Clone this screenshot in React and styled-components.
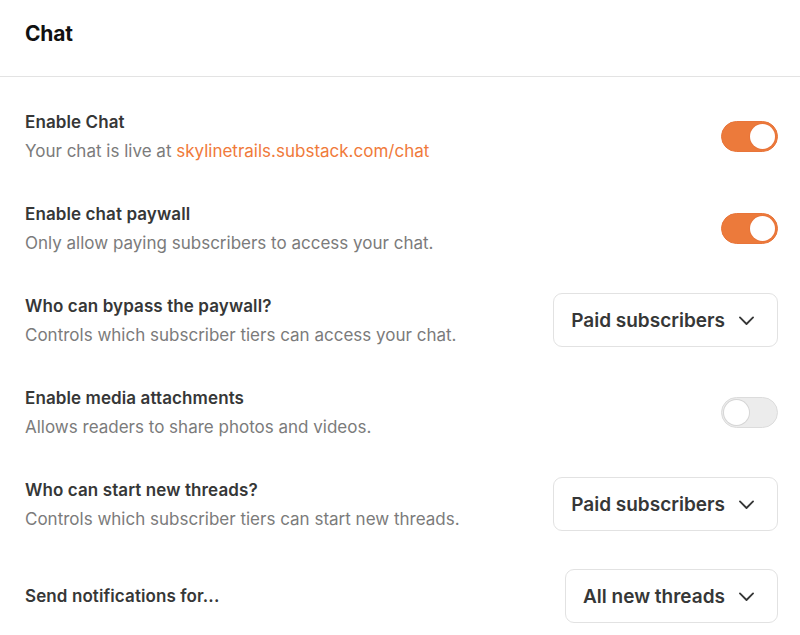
import React from "react";
import styled, { createGlobalStyle } from "styled-components";

const GlobalStyle = createGlobalStyle`
  html, body {
    margin: 0;
    padding: 0;
    background: #fff;
  }
  body {
    font-family: Inter, "Open Sans", sans-serif;
    -webkit-font-smoothing: antialiased;
  }
`;

const Page = styled.div`
  width: 800px;
  height: 635px;
  overflow: hidden;
  background: #fff;
`;

const Header = styled.header`
  height: 77px;
  display: flex;
  align-items: center;
  padding: 0 25px 10px;
  box-sizing: border-box;
  border-bottom: 1px solid #e3e3e3;
`;

const Title = styled.h1`
  margin: 0;
  font-size: 21px;
  font-weight: 700;
  color: #111;
  letter-spacing: -0.2px;
`;

const Content = styled.div`
  padding: 13px 22px 0 25px;
`;

const Row = styled.div`
  height: 92px;
  display: flex;
  align-items: center;
  justify-content: space-between;
`;

const Text = styled.div`
  display: flex;
  flex-direction: column;
  gap: 5px;
`;

const Label = styled.div`
  font-size: 17px;
  font-weight: 600;
  color: #363737;
  line-height: 24px;
  letter-spacing: 0.1px;
`;

const Desc = styled.div`
  font-size: 17px;
  color: #7b7b7b;
  line-height: 24px;
`;

const Link = styled.a`
  color: #f07a3a;
  text-decoration: none;
`;

const Track = styled.button`
  width: 57px;
  height: 31px;
  border-radius: 16px;
  border: 1px solid ${(p) => (p.on ? "#e8753a" : "#dcdcdc")};
  background: ${(p) => (p.on ? "#ec7a3b" : "#ececec")};
  padding: 0;
  display: flex;
  align-items: center;
  justify-content: ${(p) => (p.on ? "flex-end" : "flex-start")};
  box-sizing: border-box;
  cursor: pointer;
`;

const Knob = styled.span`
  width: 25px;
  height: 25px;
  border-radius: 50%;
  background: #fff;
  margin: 0 2px;
  box-shadow: 0 0 0 1px ${(p) => (p.on ? "#e8753a" : "#d6d6d6")};
`;

const Select = styled.button`
  height: 54px;
  display: flex;
  align-items: center;
  gap: 11px;
  padding: 0 20px 0 17px;
  border: 1px solid #e2e2e2;
  border-radius: 9px;
  background: #fff;
  font-family: inherit;
  font-size: 19px;
  font-weight: 600;
  color: #363737;
  box-sizing: border-box;
  cursor: pointer;
`;

function Toggle({ on }) {
  return (
    <Track on={on ? 1 : 0}>
      <Knob on={on ? 1 : 0} />
    </Track>
  );
}

function Dropdown({ value }) {
  return (
    <Select>
      {value}
      <svg width="21" height="21" viewBox="0 0 24 24" fill="none" stroke="#363737" strokeWidth="2.1" strokeLinecap="round" strokeLinejoin="round">
        <path d="M4.5 8.5l7.5 7.5 7.5-7.5" />
      </svg>
    </Select>
  );
}

const rows = [
  {
    label: "Enable Chat",
    desc: (
      <>
        Your chat is live at <Link href="#">skylinetrails.substack.com/chat</Link>
      </>
    ),
    control: <Toggle on />,
  },
  {
    label: "Enable chat paywall",
    desc: "Only allow paying subscribers to access your chat.",
    control: <Toggle on />,
  },
  {
    label: "Who can bypass the paywall?",
    desc: "Controls which subscriber tiers can access your chat.",
    control: <Dropdown value="Paid subscribers" />,
  },
  {
    label: "Enable media attachments",
    desc: "Allows readers to share photos and videos.",
    control: <Toggle />,
  },
  {
    label: "Who can start new threads?",
    desc: "Controls which subscriber tiers can start new threads.",
    control: <Dropdown value="Paid subscribers" />,
  },
  {
    label: "Send notifications for...",
    control: <Dropdown value="All new threads" />,
  },
];

export default function App() {
  return (
    <Page>
      <GlobalStyle />
      <Header>
        <Title>Chat</Title>
      </Header>
      <Content>
        {rows.map((r) => (
          <Row key={r.label}>
            <Text>
              <Label>{r.label}</Label>
              {r.desc && <Desc>{r.desc}</Desc>}
            </Text>
            {r.control}
          </Row>
        ))}
      </Content>
    </Page>
  );
}
